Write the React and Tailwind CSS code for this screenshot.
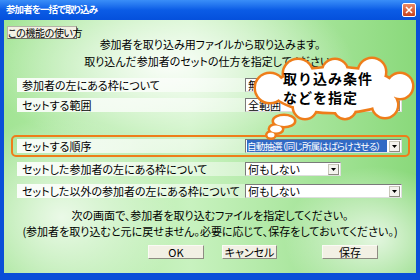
import React from 'react'

const cloudShapes = [
  { cx: 20, cy: 33, rx: 14, ry: 14 },
  { cx: 48, cy: 19, rx: 14, ry: 14 },
  { cx: 85, cy: 17, rx: 12, ry: 12 },
  { cx: 122, cy: 17, rx: 13, ry: 13 },
  { cx: 150, cy: 31, rx: 12, ry: 12 },
  { cx: 135, cy: 50, rx: 12, ry: 12 },
  { cx: 95, cy: 53, rx: 10, ry: 10 },
  { cx: 55, cy: 52, rx: 11, ry: 11 },
  { cx: 85, cy: 35, rx: 62, ry: 22 },
  // tail bubbles
  { cx: 34, cy: 66, rx: 10, ry: 5 },
  { cx: 26, cy: 74, rx: 6, ry: 3.5 },
  { cx: 21, cy: 80, rx: 3.5, ry: 2.5 },
]

function Arrow() {
  return (
    <span className="ml-auto mr-[1px] w-[11px] h-[11px] flex-none flex items-center justify-center bg-[#f4f3ee] border border-[#c9c7ba] border-r-[#8c8a80] border-b-[#8c8a80]">
      <svg width="5" height="3" viewBox="0 0 5 3">
        <polygon points="0,0 5,0 2.5,3" fill="#000" />
      </svg>
    </span>
  )
}

function Select({ width, value, selected }) {
  return (
    <div
      className={`flex items-center h-[14px] bg-white border border-[#7a7a7a] border-r-[#dedede] border-b-[#dedede] ${width}`}
    >
      {selected ? (
        <span className="ml-[1px] w-[140px] h-[12px] leading-[12px] text-[9.5px] tracking-[-0.8px] text-white bg-[#316ac5] whitespace-nowrap overflow-hidden">
          {value}
        </span>
      ) : (
        <span className="ml-[2px] text-[11px] leading-[12px] whitespace-nowrap">{value}</span>
      )}
      <Arrow />
    </div>
  )
}

function Row({ label, children, className = '' }) {
  return (
    <div className={`flex items-center h-[14px] ${className}`}>
      <div className="w-[228px] h-[14px] pl-[5px] text-[11px] leading-[14px] whitespace-nowrap bg-linear-to-r from-white/90 via-white/70 to-white/40">
        {label}
      </div>
      {children}
    </div>
  )
}

function XpButton({ children, className = '' }) {
  return (
    <button
      type="button"
      className={`h-[14px] text-[11px] leading-[12px] bg-[#f2f0e4] border border-[#fbfaf5] border-r-[#8e8c82] border-b-[#8e8c82] ${className}`}
    >
      {children}
    </button>
  )
}

export default function App() {
  return (
    <div className="w-[420px] h-[280px] flex flex-col overflow-hidden bg-[#0a4fd8] text-black font-['Noto_Sans_CJK_JP','Noto_Sans',sans-serif] [font-feature-settings:'palt']">
      {/* Title bar */}
      <div className="h-[20px] flex items-center pl-[6px] pr-[4px] bg-linear-to-b from-[#3a8ef8] via-[#0b5ce6] to-[#0550dc]">
        <span className="text-[9.5px] font-bold leading-none tracking-[-0.9px] text-white">参加者を一括で取り込み</span>
        <button
          type="button"
          className="ml-auto w-[14px] h-[14px] rounded-[2px] border border-white flex items-center justify-center bg-linear-to-b from-[#ec8a64] to-[#c6411c]"
        >
          <svg width="8" height="8" viewBox="0 0 8 8">
            <path d="M1 1 L7 7 M7 1 L1 7" stroke="#fff" strokeWidth="1.6" />
          </svg>
        </button>
      </div>

      {/* Client area */}
      <div className="relative flex-1 mx-[4px] mb-[7px] overflow-hidden bg-[radial-gradient(ellipse_45%_35%_at_40%_18%,rgba(255,255,255,0.9),rgba(255,255,255,0)),radial-gradient(ellipse_28%_40%_at_14%_78%,rgba(255,255,255,0.75),rgba(255,255,255,0)),radial-gradient(ellipse_22%_28%_at_90%_86%,rgba(255,255,255,0.75),rgba(255,255,255,0)),linear-gradient(to_right,#a2e494,#c8f2bf_45%,#8ad97b)]">
        <div className="flex pt-[6px] pl-[3px]">
          <button
            type="button"
            className="w-[70px] h-[13px] px-0 text-[10px] leading-[11px] tracking-[-0.4px] whitespace-nowrap bg-[#f3f1e4] border border-[#b4b2a6] border-r-[#6f6d64] border-b-[#6f6d64]"
          >
            この機能の使い方
          </button>
        </div>

        <div className="-mt-[3px] text-center text-[11px] leading-[17px]">
          <p>参加者を取り込み用ファイルから取り込みます。</p>
          <p>取り込んだ参加者のセットの仕方を指定してください。</p>
        </div>

        <div className="mt-[8px] flex flex-col gap-[6px]">
          <Row label="参加者の左にある枠について" className="ml-[13px]">
            <Select width="w-[157px]" value="無視" />
          </Row>
          <Row label="セットする範囲" className="ml-[13px]">
            <Select width="w-[157px]" value="全範囲" />
          </Row>
        </div>

        {/* Highlighted row */}
        <div className="mt-[23px] ml-[7px] w-[399px] h-[22px] pl-[4px] flex items-center border-2 border-[#ee7d1a] rounded-[5px]">
          <Row label="セットする順序">
            <Select width="w-[157px]" value="自動抽選（同じ所属はばらけさせる）" selected />
          </Row>
        </div>

        <Row label="セットした参加者の左にある枠について" className="ml-[13px] mt-[5px]">
          <Select width="w-[96px]" value="何もしない" />
        </Row>
        <Row label="セットした以外の参加者の左にある枠について" className="ml-[13px] mt-[8px]">
          <Select width="w-[157px]" value="何もしない" />
        </Row>

        <div className="mt-[9px] text-center text-[11px] leading-[16px]">
          <p>次の画面で、参加者を取り込むファイルを指定してください。</p>
          <p>(参加者を取り込むと元に戻せません。必要に応じて、保存をしておいてください。)</p>
        </div>

        <div className="mt-[6px] flex pl-[144px]">
          <XpButton className="w-[56px]">OK</XpButton>
          <XpButton className="w-[55px] ml-[18px]">キャンセル</XpButton>
          <XpButton className="w-[56px] ml-[45px]">保存</XpButton>
        </div>

        {/* Thought cloud callout */}
        <div className="absolute left-[246px] top-[35px] w-[170px] h-[90px]">
          <svg width="170" height="90" viewBox="0 0 170 90" className="absolute inset-0">
            {cloudShapes.map((s, i) => (
              <ellipse key={'o' + i} cx={s.cx} cy={s.cy} rx={s.rx} ry={s.ry} fill="#ee7d1a" stroke="#ee7d1a" strokeWidth="5" />
            ))}
            {cloudShapes.map((s, i) => (
              <ellipse key={'w' + i} cx={s.cx} cy={s.cy} rx={s.rx} ry={s.ry} fill="#fff" />
            ))}
          </svg>
          <div className="absolute left-[33px] top-[14px] text-[14px] font-bold leading-[19px] tracking-[1px] whitespace-nowrap [font-feature-settings:normal]">
            <p>取り込み条件</p>
            <p>などを指定</p>
          </div>
        </div>
      </div>
    </div>
  )
}
